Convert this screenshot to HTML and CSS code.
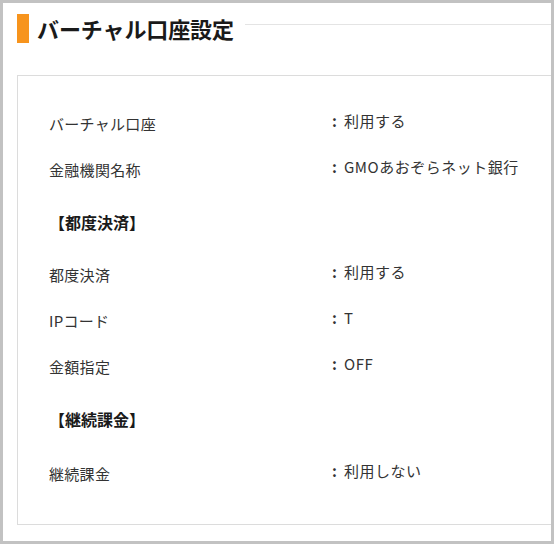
FILE: index.html
```html
<!DOCTYPE html>
<html lang="ja">

<head>
    <meta charset="UTF-8">
    <meta name="viewport" content="width=device-width, initial-scale=1.0">
    <title>バーチャル口座設定</title>
    <link rel="stylesheet" href="styles.css">
</head>

<body>
    <div class="frame">
        <div class="title-row">
            <span class="title-bar"></span>
            <h1 class="title">バーチャル口座設定</h1>
            <span class="title-line"></span>
        </div>

        <div class="panel">
            <div class="row">
                <span class="label">バーチャル口座</span>
                <span class="value"><span class="sep">:</span>利用する</span>
            </div>
            <div class="row">
                <span class="label">金融機関名称</span>
                <span class="value"><span class="sep">:</span>GMOあおぞらネット銀行</span>
            </div>

            <div class="section-head">【都度決済】</div>
            <div class="row">
                <span class="label">都度決済</span>
                <span class="value"><span class="sep">:</span>利用する</span>
            </div>
            <div class="row">
                <span class="label">IPコード</span>
                <span class="value"><span class="sep">:</span>T</span>
            </div>
            <div class="row">
                <span class="label">金額指定</span>
                <span class="value"><span class="sep">:</span>OFF</span>
            </div>

            <div class="section-head">【継続課金】</div>
            <div class="row">
                <span class="label">継続課金</span>
                <span class="value"><span class="sep">:</span>利用しない</span>
            </div>
        </div>
    </div>
</body>

</html>
```

FILE: styles.css
```css
* {
    margin: 0;
    padding: 0;
    box-sizing: border-box;
}

body {
    background-color: #fff;
    color: #333;
    font-family: "Noto Sans CJK JP", "Noto Sans", sans-serif;
    font-size: 15px;
}

.frame {
    width: 554px;
    height: 544px;
    border: 3px solid #c2c2c2;
    padding-top: 11px;
    overflow: hidden;
}

.title-row {
    display: flex;
    align-items: center;
    padding-left: 14px;
}

.title-bar {
    width: 12px;
    height: 29px;
    background-color: #f7941d;
    flex-shrink: 0;
}

.title {
    font-size: 22px;
    font-weight: 700;
    color: #1a1a1a;
    margin-left: 8px;
    line-height: 29px;
    letter-spacing: -0.1px;
}

.title-line {
    flex-grow: 1;
    height: 1px;
    background-color: #e4e4e4;
    margin-left: 11px;
    align-self: flex-start;
    margin-top: 10px;
}

.panel {
    margin-top: 32px;
    margin-left: 14px;
    height: 450px;
    border: 1px solid #dcdcdc;
    border-right: none;
    padding-top: 24px;
}

.row {
    display: grid;
    grid-template-columns: 279px 1fr;
    align-items: center;
    height: 46px;
    padding-left: 31px;
    letter-spacing: 0.3px;
}

.value {
    margin-bottom: 6px;
    letter-spacing: 0.5px;
}

.sep {
    display: inline-block;
    width: 16px;
    padding-left: 4px;
    font-weight: 700;
}

.section-head {
    display: flex;
    align-items: center;
    height: 59px;
    padding-left: 31px;
    font-size: 16px;
    font-weight: 700;
    color: #1a1a1a;
}

.section-head + .row + .row + .row + .section-head {
    height: 61px;
    padding-bottom: 2px;
}
```
